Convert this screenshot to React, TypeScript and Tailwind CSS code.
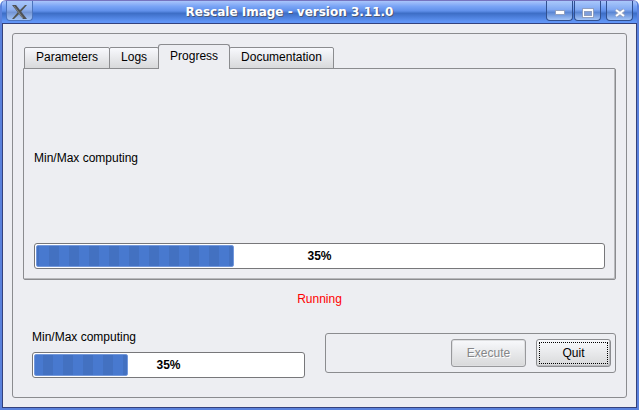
import { useState } from "react";
import type { ReactNode } from "react";

const TABS = ["Parameters", "Logs", "Progress", "Documentation"];

function TitleButton({ label, children }: { label: string; children: ReactNode }) {
  return (
    <button
      type="button"
      aria-label={label}
      className="flex h-5 w-[27px] items-center justify-center rounded-b-[4px] border border-t-0 border-[#31508f] bg-[linear-gradient(#a9c8fb,#82a9f2_45%,#5a86d4_60%,#a2c3f6)] pt-[5px]"
    >
      {children}
    </button>
  );
}

function ProgressBar({ value, label, stripes }: { value: number; label: string; stripes: string }) {
  return (
    <div
      role="progressbar"
      aria-label={label}
      aria-valuenow={value}
      aria-valuemin={0}
      aria-valuemax={100}
      className="relative h-[26px] rounded-[3px] border border-[#77777a] bg-white p-px"
    >
      <div
        className={`h-full rounded-[2px] border border-[#7398dc] ${stripes}`}
        style={{ width: `${value}%` }}
      />
      <span className="absolute inset-0 flex items-center justify-center font-bold">{value}%</span>
    </div>
  );
}

export default function App() {
  const [active, setActive] = useState("Progress");

  return (
    <div className="flex min-h-screen flex-col overflow-hidden rounded-t-[6px] border-x-2 border-b-2 border-[#5b82dc] bg-[#edeef2] font-['Liberation_Sans',Arial,sans-serif] text-[12px] leading-4 text-black">
      <header className="-mx-0.5 flex h-6 items-start rounded-t-[6px] border-t border-b border-t-[#7674bf] border-b-[#34427c] bg-[linear-gradient(#a9c5fb,#78a3f5_25%,#6090ea_45%,#3d6ec6_56%,#6196f7_95%)] px-[6px]">
        <button
          type="button"
          aria-label="Window menu"
          className="flex h-5 w-[27px] justify-center rounded-b-[4px] border border-t-0 border-[#4c74bd] bg-[linear-gradient(#a9c8fb,#8fb0f0_45%,#7495d4_60%,#a2c3f6)] pt-[3px]"
        >
          <svg width="17" height="16" viewBox="0 0 17 16" aria-hidden="true">
            <path d="M1 1h4l11 14h-4z" fill="#4e5158" />
            <path d="M14 1h2L9 9 8 7zM7 8l1 2-5 5H1z" fill="#52544f" />
            <path d="M3 2l9 12" stroke="#85877f" strokeWidth="1" />
          </svg>
        </button>
        <h1 className="flex-1 text-center font-['DejaVu_Sans',sans-serif] text-[12px] leading-[22px] font-bold text-white [text-shadow:1px_1px_0_#4b5774]">
          Rescale Image - version 3.11.0
        </h1>
        <div className="flex justify-end gap-px">
          <TitleButton label="Minimize">
            <svg width="12" height="12" viewBox="0 0 12 12" aria-hidden="true">
              <rect x="1.5" y="3.5" width="9" height="4" fill="#fff" stroke="#8f9fc0" />
            </svg>
          </TitleButton>
          <TitleButton label="Maximize">
            <svg width="12" height="12" viewBox="0 0 12 12" aria-hidden="true">
              <rect x="0.5" y="1.5" width="11" height="9" fill="#fff" stroke="#8f9fc0" />
              <rect x="2.5" y="4.5" width="7" height="4" fill="#7f9fdc" stroke="#8f9fc0" />
            </svg>
          </TitleButton>
          <div className="ml-1 flex">
            <TitleButton label="Close">
              <svg width="12" height="12" viewBox="0 0 12 12" aria-hidden="true">
                <path d="M2 3l8 6M10 3l-8 6" stroke="#8f9fc0" strokeWidth="4" />
                <path d="M2 3l8 6M10 3l-8 6" stroke="#fff" strokeWidth="2" />
              </svg>
            </TitleButton>
          </div>
        </div>
      </header>

      <main className="flex flex-1 flex-col border-x border-b border-[#34427c] p-[9px]">
        <div className="flex flex-1 flex-col rounded-[3px] border border-[#8b8c8f] px-[10px] pt-[10px] pb-[19px]">
          <div role="tablist" className="relative z-10 -mb-px flex items-end">
            {TABS.map((tab) => (
              <button
                key={tab}
                type="button"
                role="tab"
                aria-selected={tab === active}
                onClick={() => setActive(tab)}
                className={
                  tab === active
                    ? "-ml-px h-[25px] rounded-t-[3px] border border-b-0 border-[#8b8c8f] bg-[#edeef2] px-[11px] pb-[2px]"
                    : "h-[22px] rounded-t-[2px] border border-[#8b8c8f] bg-linear-to-b from-[#f8f9fd] to-[#d8d9db] px-[11px] pb-[2px] not-first:-ml-px first:ml-px"
                }
              >
                {tab}
              </button>
            ))}
          </div>

          <section
            role="tabpanel"
            aria-label={active}
            className="flex flex-1 flex-col rounded-b-[2px] rounded-tr-[2px] border border-[#8b8c8f] px-[10px] pb-[10px] shadow-[inset_-1px_-1px_0_#b9babd]"
          >
            <p className="flex flex-1 items-center pt-1">Min/Max computing</p>
            <ProgressBar
              value={35}
              label="Min/Max computing"
              stripes="bg-[repeating-linear-gradient(90deg,#4371c1_0px,#4371c1_2px,#4879cf_2px,#4879cf_12px,#4371c1_12px,#4371c1_20px)]"
            />
          </section>

          <p className="pt-[11px] pb-3 text-center text-[#f00]">Running</p>

          <footer className="grid grid-cols-[31fr_32fr] items-start gap-5 pt-[10px]">
            <div className="flex flex-col gap-[7px] pl-[9px]">
              <p>Min/Max computing</p>
              <ProgressBar
                value={35}
                label="Overall progress"
                stripes="bg-[repeating-linear-gradient(90deg,#4879cf_0px,#4879cf_8px,#4371c1_8px,#4371c1_18px,#4879cf_18px,#4879cf_20px)]"
              />
            </div>
            <div className="mt-1 flex justify-end gap-[10px] rounded-[3px] border border-[#8b8c8f] px-1 py-[5px]">
              <button
                type="button"
                disabled
                className="h-7 w-[75px] rounded-[3px] border border-[#98999c] bg-linear-to-b from-[#f8f9fc] to-[#d8d9da] pb-px text-[#858688] shadow-[inset_0_0_0_1px_#dedfe1] [text-shadow:1px_1px_0_#fff]"
              >
                Execute
              </button>
              <button
                type="button"
                className="h-7 w-[75px] rounded-[3px] border border-[#8b8c8f] bg-linear-to-b from-[#f8f9fc] to-[#d8d9da] p-[2px] shadow-[inset_-1px_-1px_0_#b9babd]"
              >
                <span className="flex h-full items-center justify-center border border-dotted border-black pb-px">Quit</span>
              </button>
            </div>
          </footer>
        </div>
      </main>
    </div>
  );
}
